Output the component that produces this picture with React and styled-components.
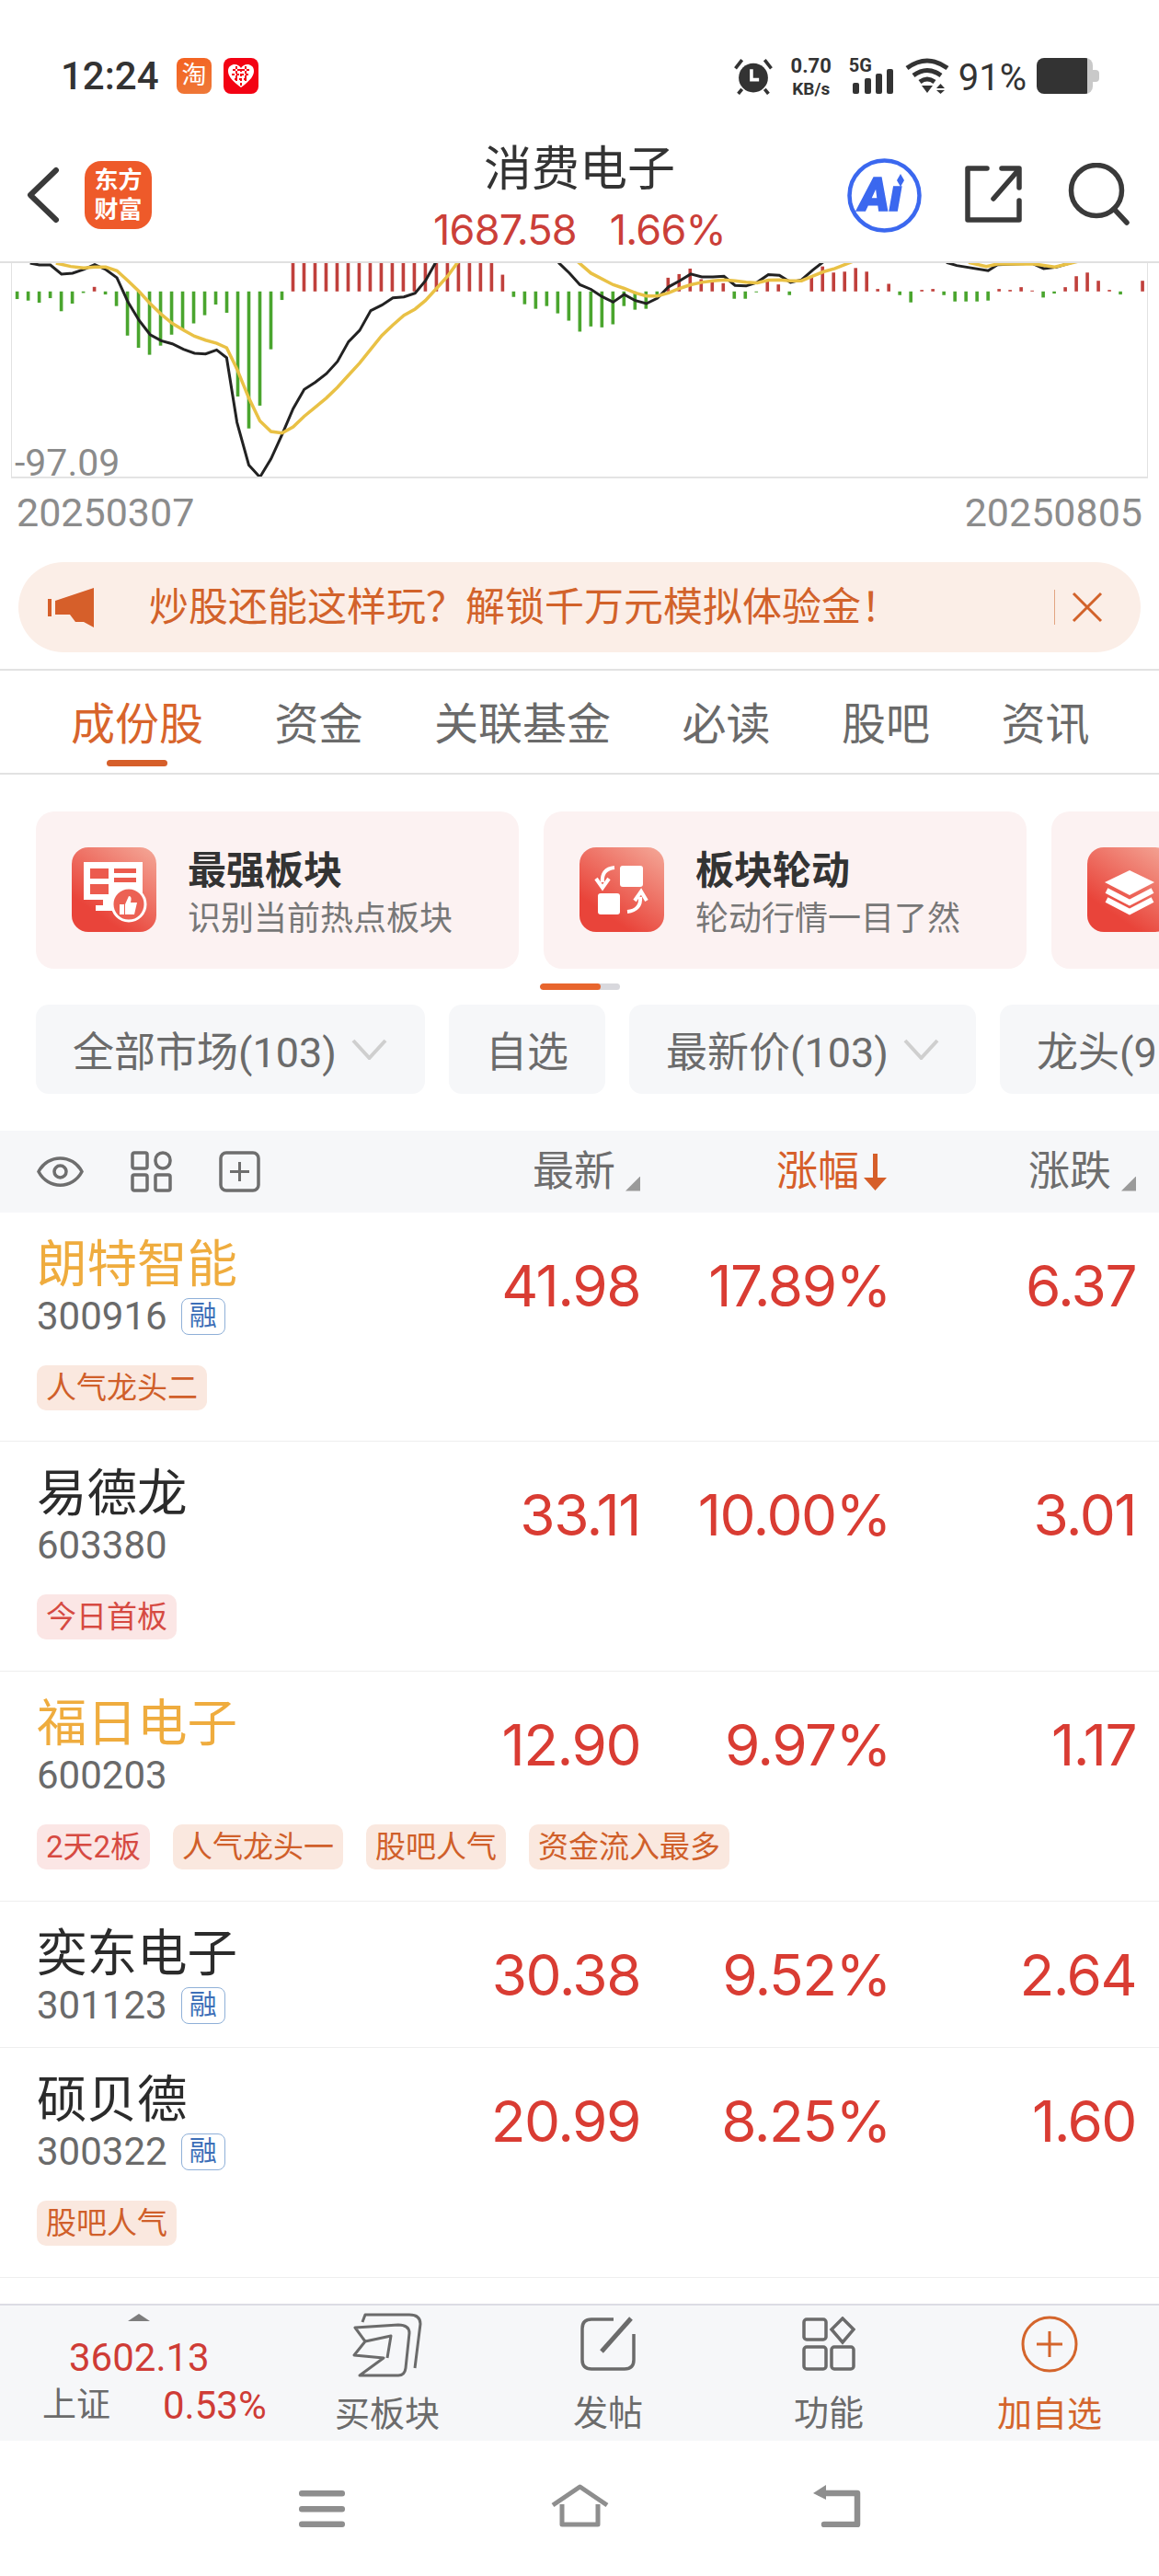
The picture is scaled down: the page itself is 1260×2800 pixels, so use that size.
import React from "react";
import styled, { createGlobalStyle } from "styled-components";

const GlobalStyle = createGlobalStyle`
  html, body {
    margin: 0;
    padding: 0;
    background: #fff;
  }
  body {
    font-family: Roboto, "Noto Sans CJK SC", sans-serif;
  }
`;

const Page = styled.div`
  width: 1260px;
  height: 2800px;
  overflow: hidden;
  background: #fff;
`;

/* status bar */
const StatusBar = styled.div`
  height: 150px;
  box-sizing: border-box;
  padding: 63px 65px 0 66px;
  display: flex;
  align-items: flex-start;
  color: #333;
`;
const Time = styled.div`
  font-size: 42px;
  line-height: 40px;
  font-weight: 500;
  width: 126px;
`;
const AppBadge = styled.div`
  width: 38px;
  height: 39px;
  border-radius: 8px;
  background: ${(p) => p.$bg};
  color: #fff;
  font-size: 27px;
  line-height: 38px;
  text-align: center;
  margin-right: 13px;
  overflow: hidden;
`;
const StatusRight = styled.div`
  margin-left: auto;
  display: flex;
  align-items: flex-start;
`;
const Speed = styled.div`
  width: 46px;
  margin: -1px 18px 0;
  font-weight: 700;
  text-align: center;
  div:first-child {
    font-size: 22px;
    line-height: 20px;
    margin-bottom: 6px;
  }
  div:last-child {
    font-size: 19px;
    line-height: 18px;
  }
`;
const Net = styled.div`
  width: 49px;
  margin-right: 12px;
  font-size: 20px;
  line-height: 16px;
  font-weight: 700;
  svg {
    display: block;
    margin-top: -4px;
  }
`;
const Percent = styled.div`
  font-size: 40px;
  line-height: 40px;
  margin: 2px 11px 0 10px;
`;
const Battery = styled.div`
  position: relative;
  width: 61px;
  height: 39px;
  border-radius: 8px;
  background: linear-gradient(90deg, #333 90%, #c9c9c9 90%);
  margin-right: 7px;
  &::after {
    content: "";
    position: absolute;
    right: -7px;
    top: 13px;
    width: 7px;
    height: 13px;
    border-radius: 0 4px 4px 0;
    background: #c9c9c9;
  }
`;

/* header */
const Header = styled.div`
  height: 136px;
  box-sizing: border-box;
  border-bottom: 2px solid #e0e0e0;
  display: grid;
  grid-template-columns: 1fr auto 1fr;
`;
const HeaderLeft = styled.div`
  display: flex;
  align-items: flex-start;
  padding: 25px 0 0 28px;
  gap: 27px;
  svg {
    margin-top: 6px;
  }
`;
const Logo = styled.div`
  width: 73px;
  height: 74px;
  border-radius: 18px;
  background: #ee5a2a;
  color: #fff;
  font-size: 26px;
  font-weight: 700;
  line-height: 32px;
  text-align: center;
  padding-top: 5px;
  box-sizing: border-box;
`;
const HeaderCenter = styled.div`
  text-align: center;
  padding-top: 5px;
`;
const Title = styled.div`
  font-size: 52px;
  line-height: 60px;
  color: #333;
`;
const SubTitle = styled.div`
  font-family: Inter, "Noto Sans CJK SC", sans-serif;
  font-size: 45px;
  letter-spacing: -0.8px;
  line-height: 60px;
  margin-top: 5px;
  color: #cb3f39;
  display: flex;
  gap: 36px;
  justify-content: center;
`;
const HeaderRight = styled.div`
  display: flex;
  justify-content: flex-end;
  align-items: flex-start;
  padding: 21px 31px 0 0;
`;

/* chart */
const ChartBox = styled.div`
  position: relative;
  margin: 0 12px;
  height: 234px;
  box-sizing: border-box;
  border-left: 1.5px solid #e2e2e2;
  border-right: 1.5px solid #e2e2e2;
  border-bottom: 2px solid #e4e4e4;
  svg {
    display: block;
    width: 100%;
    height: 100%;
  }
`;
const MinLabel = styled.div`
  position: absolute;
  left: 3px;
  bottom: -9px;
  font-size: 41px;
  line-height: 48px;
  color: #8b8b8b;
`;
const Dates = styled.div`
  display: flex;
  justify-content: space-between;
  padding: 13px 18px 0;
  height: 49px;
  font-size: 43px;
  line-height: 48px;
  color: #8c8c8c;
`;

/* banner */
const Banner = styled.div`
  margin: 29px 20px 18px;
  height: 98px;
  border-radius: 49px;
  background: #fbeee7;
  display: flex;
  align-items: center;
  padding-left: 32px;
  color: #d2622a;
`;
const BannerText = styled.div`
  margin-left: 60px;
  width: 984px;
  font-size: 43px;
  line-height: 50px;
  white-space: nowrap;
`;
const BannerLine = styled.div`
  width: 1px;
  height: 38px;
  background: #e2a582;
  margin-right: 18px;
`;

/* tabs */
const Tabs = styled.div`
  height: 115px;
  box-sizing: border-box;
  border-top: 2px solid #e2e2e2;
  border-bottom: 2px solid #e2e2e2;
  display: flex;
  gap: 77.5px;
  padding: 31px 0 0 77px;
`;
const Tab = styled.div`
  position: relative;
  font-size: 48px;
  line-height: 56px;
  height: 56px;
  color: ${(p) => (p.$active ? "#d8642b" : "#6a6a6a")};
  ${(p) =>
    p.$active &&
    `&::after {
      content: "";
      position: absolute;
      left: 39px;
      top: 66px;
      width: 66px;
      height: 7px;
      border-radius: 4px;
      background: #d65f2a;
    }`}
`;

/* feature cards */
const CardRow = styled.div`
  display: flex;
  gap: 27px;
  padding-left: 39px;
  margin-top: 40px;
  overflow: hidden;
`;
const Card = styled.div`
  flex: 0 0 525px;
  height: 171px;
  box-sizing: border-box;
  border-radius: 20px;
  background: #fcf2f2;
  display: flex;
  gap: 34px;
  padding: 39px 0 0 39px;
`;
const CardIcon = styled.div`
  width: 92px;
  height: 92px;
  flex: none;
  border-radius: 18px;
  background: linear-gradient(35deg, #e9443a 25%, #f4a999 100%);
  svg {
    display: block;
  }
`;
const CardText = styled.div`
  white-space: nowrap;
`;
const CardTitle = styled.div`
  font-size: 42px;
  line-height: 52px;
  font-weight: 700;
  color: #333;
`;
const CardSub = styled.div`
  font-size: 36px;
  line-height: 52px;
  color: #777;
`;
const Pager = styled.div`
  width: 87px;
  height: 7px;
  margin: 16px 0 16px 587px;
  border-radius: 4px;
  background: #d8d8dd;
  overflow: hidden;
  &::before {
    content: "";
    display: block;
    width: 66px;
    height: 7px;
    border-radius: 4px;
    background: #e8652d;
  }
`;

/* filters */
const Filters = styled.div`
  display: flex;
  gap: 26px;
  padding-left: 39px;
  overflow: hidden;
`;
const Filter = styled.div`
  flex: none;
  width: ${(p) => p.$w}px;
  height: 97px;
  box-sizing: border-box;
  border-radius: 14px;
  background: #f6f7f9;
  display: flex;
  align-items: center;
  gap: 16px;
  padding-left: 40px;
  font-size: 45px;
  color: #6b6b6b;
  white-space: nowrap;
`;

/* table */
const columns = "1fr 200px 272px 267px";
const TableHead = styled.div`
  margin-top: 40px;
  height: 89px;
  background: #f6f7f9;
  box-sizing: border-box;
  padding: 0 28px 0 40px;
  display: grid;
  grid-template-columns: ${columns};
  align-items: center;
`;
const HeadIcons = styled.div`
  display: flex;
  align-items: center;
  gap: 51px;
  svg {
    display: block;
  }
`;
const HeadCell = styled.div`
  display: flex;
  justify-content: flex-end;
  align-items: center;
  font-size: 45px;
  line-height: 52px;
  color: ${(p) => (p.$active ? "#d65f2a" : "#6e6e6e")};
`;
const SortMark = styled.span`
  width: 16px;
  height: 16px;
  margin: 26px -3px 0 11px;
  background: #9a9a9a;
  clip-path: polygon(100% 0, 100% 100%, 0 100%);
`;
const List = styled.div`
  height: 1186px;
`;
const Row = styled.div`
  box-sizing: border-box;
  height: ${(p) => p.$h}px;
  border-bottom: 1px solid #efefef;
  padding: 24px 28px 0 40px;
`;
const RowMain = styled.div`
  display: grid;
  grid-template-columns: ${columns};
`;
const StockName = styled.div`
  font-size: 54.5px;
  line-height: 64px;
  color: ${(p) => (p.$gold ? "#efac3e" : "#2b2b2b")};
`;
const StockCode = styled.div`
  display: flex;
  align-items: center;
  gap: 15px;
  margin-top: 3px;
  font-size: 42px;
  line-height: 44px;
  color: #6a6a6a;
`;
const RongBadge = styled.span`
  width: 48px;
  height: 40px;
  box-sizing: border-box;
  border: 1.5px solid #8fb0d8;
  border-radius: 8px;
  color: #3d6fb8;
  font-size: 30px;
  line-height: 36px;
  text-align: center;
`;
const Num = styled.div`
  font-family: Inter, "Noto Sans CJK SC", sans-serif;
  font-size: 62px;
  letter-spacing: -1.5px;
  line-height: 64px;
  padding-top: 24px;
  margin-right: -3px;
  text-align: right;
  color: #d93c33;
`;
const Tags = styled.div`
  display: flex;
  gap: 25px;
  margin-top: 31px;
`;
const Tag = styled.div`
  height: 49px;
  box-sizing: border-box;
  padding: 0 10px;
  border-radius: 10px;
  font-size: 33px;
  line-height: 49px;
  background: ${(p) => (p.$red ? "#fbe6e5" : "#fae8df")};
  color: ${(p) => (p.$red ? "#d64a42" : "#d05f2a")};
`;

/* bottom bar */
const BottomBar = styled.div`
  height: 149px;
  box-sizing: border-box;
  border-top: 2px solid #dcdce4;
  background: #f6f7f9;
  display: grid;
  grid-template-columns: 301px repeat(4, 240px);
`;
const IndexBox = styled.div`
  position: relative;
  padding: 35px 0 0 46px;
  &::before {
    content: "";
    position: absolute;
    left: 139px;
    top: 9px;
    border-left: 12px solid transparent;
    border-right: 12px solid transparent;
    border-bottom: 8px solid #7d7d7d;
  }
`;
const IndexValue = styled.div`
  font-size: 42px;
  line-height: 44px;
  color: #cf3c36;
  padding-left: 29px;
`;
const IndexLine = styled.div`
  display: flex;
  align-items: center;
  margin-top: 8px;
  line-height: 44px;
  font-size: 37px;
  color: #6b6b6b;
  span {
    font-size: 42px;
    color: #cf3c36;
    margin-left: 57px;
  }
`;
const Action = styled.div`
  height: 147px;
  display: flex;
  flex-direction: column;
  align-items: center;
  padding-top: ${(p) => p.$top}px;
  box-sizing: border-box;
  font-size: 38px;
  line-height: 44px;
  color: ${(p) => (p.$active ? "#d4652c" : "#6b6b6b")};
  svg {
    display: block;
    margin-bottom: ${(p) => p.$gap}px;
  }
`;
const NavBar = styled.div`
  display: grid;
  grid-template-columns: repeat(3, 280px);
  justify-content: center;
  justify-items: center;
  align-items: end;
  height: 94px;
  svg {
    display: block;
  }
`;

// bar heights read off the chart, + is red and - is green
const macdBars = [
  -25, -30, -37, -22, -65, -40, -5, 15, -10, -48, -145, -185, -208, -178, -142, -125, -105, -78, -43, -70, -345,
  -450, -375, -190, -28, 100, 100, 100, 100, 100, 100, 100, 100, 100, 100, 100, 100, 100, 100, 100, 100, 100, 100,
  100, 55, -18, -42, -57, -48, -72, -96, -132, -115, -118, -108, -48, -60, -57, -20, 45, 57, 75, 40, 30, 27, -24,
  -24, -3, 35, 23, -12, 0, 47, 82, 62, 65, 77, 65, 8, 25, -12, -36, 5, 8, -12, -33, -33, -33, -30, 8, 5, 14, 3, -20,
  -7, 14, 50, 62, 35, 5, -10, 0, 35,
];

const difLines = [
  "80,407 105,413 135,413 165,443 195,440 225,428 255,412 285,428 315,455 345,535 375,595 405,642 435,662 465,672 495,690 525,703 555,705 585,692 612,718 640,930 672,1070 702,1110 732,1050 762,970 792,885 822,822 852,798 882,770 912,730 942,665 972,628 1002,563 1032,545 1062,521 1092,518 1122,506 1150,465 1180,400",
  "2230,400 2198,430 2168,462 2138,470 2108,447 2078,445 2048,470 2018,482 1988,480 1958,450 1928,452 1898,452 1868,443 1838,465 1808,485 1778,522 1748,540 1718,530 1688,510 1658,535 1628,517 1598,493 1568,478 1540,440 1510,405",
  "2560,405 2588,415 2673,432 2698,412 2793,408 2823,425 2858,420 2900,405",
];
const deaLines = [
  "150,407 190,418 225,423 255,420 285,420 315,432 345,465 375,500 405,540 435,575 465,605 495,627 525,647 555,660 585,670 612,685 640,755 672,850 702,925 732,960 762,965 792,945 822,910 852,880 882,850 912,815 942,775 972,735 1002,690 1032,645 1062,610 1092,578 1122,558 1150,530 1180,490 1210,450 1240,400",
  "1560,400 1598,440 1658,478 1688,490 1718,505 1748,515 1778,515 1808,505 1838,490 1868,478 1898,470 1928,465 1958,462 1988,465 2018,470 2048,472 2078,463 2108,462 2138,465 2168,465 2198,450 2228,435 2258,425 2310,400",
  "2620,405 2668,418 2698,410 2793,409 2853,420 2915,402",
];

const stocks = [
  { name: "朗特智能", code: "300916", rong: true, gold: true, price: "41.98", pct: "17.89%", diff: "6.37", h: 249, tags: [{ text: "人气龙头二" }] },
  { name: "易德龙", code: "603380", price: "33.11", pct: "10.00%", diff: "3.01", h: 250, tags: [{ text: "今日首板", red: true }] },
  {
    name: "福日电子",
    code: "600203",
    gold: true,
    price: "12.90",
    pct: "9.97%",
    diff: "1.17",
    h: 250,
    tags: [{ text: "2天2板", red: true }, { text: "人气龙头一" }, { text: "股吧人气" }, { text: "资金流入最多" }],
  },
  { name: "奕东电子", code: "301123", rong: true, price: "30.38", pct: "9.52%", diff: "2.64", h: 159, tags: [] },
  { name: "硕贝德", code: "300322", rong: true, price: "20.99", pct: "8.25%", diff: "1.60", h: 250, tags: [{ text: "股吧人气" }] },
];

const MacdChart = () => (
  <svg viewBox="31 407 3072 701" preserveAspectRatio="none">
    {macdBars.map((v, i) =>
      v === 0 ? null : (
        <rect
          key={i}
          x={40.5 + 29.86 * i}
          y={v > 0 ? 500 - v : 500}
          width="9"
          height={Math.abs(v)}
          fill={v > 0 ? "#c0403c" : "#4aa52e"}
        />
      )
    )}
    {difLines.map((pts) => (
      <polyline key={pts} points={pts} fill="none" stroke="#222" strokeWidth="3" vectorEffect="non-scaling-stroke" />
    ))}
    {deaLines.map((pts) => (
      <polyline key={pts} points={pts} fill="none" stroke="#e9c145" strokeWidth="3.5" vectorEffect="non-scaling-stroke" />
    ))}
  </svg>
);

const App = () => (
  <Page>
    <GlobalStyle />
    <StatusBar>
      <Time>12:24</Time>
      <AppBadge $bg="linear-gradient(160deg, #f4611f, #ee7a3a)">淘</AppBadge>
      <AppBadge $bg="#f30213">
        <svg width="38" height="39" viewBox="0 0 38 39">
          <path d="M19 32 C8 24 5 19 5 14 C5 9 9 7 12 7 C15 7 18 9 19 11 C20 9 23 7 26 7 C29 7 33 9 33 14 C33 19 30 24 19 32Z" fill="#fff" />
          <path d="M10 13h18M9 18h20M12 23h14M14 9v16M19 12v18M24 9v16" stroke="#f30213" strokeWidth="2" strokeDasharray="3 2" />
        </svg>
      </AppBadge>
      <StatusRight>
        <svg width="44" height="40" viewBox="0 0 40 39">
          <circle cx="20" cy="21" r="15.5" fill="#333" />
          <path d="M18 12v11h8" fill="none" stroke="#fff" strokeWidth="3.5" />
          <path d="M1 11 L8 2 M39 11 L32 2 M8 33 L4 38 M32 33 L36 38" stroke="#333" strokeWidth="3.5" />
        </svg>
        <Speed>
          <div>0.70</div>
          <div>KB/s</div>
        </Speed>
        <Net>
          5G
          <svg width="49" height="27" viewBox="0 0 49 27">
            <rect x="4" y="15" width="7" height="12" rx="2" fill="#333" />
            <rect x="17" y="10" width="7" height="17" rx="2" fill="#333" />
            <rect x="29" y="5" width="7" height="22" rx="2" fill="#333" />
            <rect x="41" y="0" width="7" height="27" rx="2" fill="#333" />
          </svg>
        </Net>
        <svg width="48" height="39" viewBox="0 0 48 39">
          <path d="M2 11 Q24 -5 46 11 M9 19 Q24 8 39 19 M16 26 Q24 20 32 26" fill="none" stroke="#333" strokeWidth="5" />
          <path d="M18 30h12l-6 8z" fill="#333" />
          <path d="M34 33h9l-4.500 -5z M34 35h9l-4.500 4z" fill="#333" />
        </svg>
        <Percent>91%</Percent>
        <Battery />
      </StatusRight>
    </StatusBar>

    <Header>
      <HeaderLeft>
        <svg width="37" height="62" viewBox="0 0 37 62">
          <path d="M33 4 L5 31 L33 58" fill="none" stroke="#3a3a3a" strokeWidth="6" strokeLinecap="round" strokeLinejoin="round" />
        </svg>
        <Logo>
          东方
          <br />
          财富
        </Logo>
      </HeaderLeft>
      <HeaderCenter>
        <Title>消费电子</Title>
        <SubTitle>
          <span>1687.58</span>
          <span>1.66%</span>
        </SubTitle>
      </HeaderCenter>
      <HeaderRight>
        <svg width="83" height="83" viewBox="0 0 83 83" style={{ marginRight: 44 }}>
          <circle cx="41.500" cy="41.500" r="38" fill="none" stroke="#3b68ef" strokeWidth="4.500" />
          <text x="14" y="58" fontFamily="Roboto" fontSize="50" fontWeight="900" fontStyle="italic" fill="#3b68ef" stroke="#3b68ef" strokeWidth="1.500">
            Ai
          </text>
          <rect x="48" y="17" width="18" height="14" fill="#fff" />
          <path d="M59 18 L63 25 L59 32 L55 25Z" fill="#3b68ef" />
        </svg>
        <svg width="65" height="66" viewBox="0 0 65 66" style={{ marginRight: 49, marginTop: 7 }}>
          <path
            d="M26 5 H5 V61 H61 V40 M33 38 L60 7 M42 5 H61 V26"
            fill="none"
            stroke="#3a3a3a"
            strokeWidth="5.500"
            strokeLinecap="round"
            strokeLinejoin="round"
          />
        </svg>
        <svg width="68" height="68" viewBox="0 0 68 68" style={{ marginTop: 6 }}>
          <circle cx="31" cy="30" r="27.500" fill="none" stroke="#3a3a3a" strokeWidth="5.500" />
          <path d="M50 50 L64 65" stroke="#3a3a3a" strokeWidth="5.500" strokeLinecap="round" />
        </svg>
      </HeaderRight>
    </Header>

    <ChartBox>
      <MacdChart />
      <MinLabel>-97.09</MinLabel>
    </ChartBox>
    <Dates>
      <span>20250307</span>
      <span>20250805</span>
    </Dates>

    <Banner>
      <svg width="50" height="43" viewBox="0 0 50 43">
        <path d="M0 12h4v19H0z M8 14 L50 0 V43 L39 37 H30 L24 29 H8Z" fill="#d65f2a" />
      </svg>
      <BannerText>{"炒股还能这样玩\uFF1F解锁千万元模拟体验金\uFF01"}</BannerText>
      <BannerLine />
      <svg width="34" height="34" viewBox="0 0 34 34">
        <path d="M2 2 L32 32 M32 2 L2 32" stroke="#d2622a" strokeWidth="3" />
      </svg>
    </Banner>

    <Tabs>
      <Tab $active>成份股</Tab>
      <Tab>资金</Tab>
      <Tab>关联基金</Tab>
      <Tab>必读</Tab>
      <Tab>股吧</Tab>
      <Tab>资讯</Tab>
    </Tabs>

    <CardRow>
      <Card>
        <CardIcon>
          <svg width="92" height="92" viewBox="0 0 92 92">
            <path d="M13 16h64v36h-20v17H26v-6h8v-6H13z" fill="#fff" />
            <path d="M20 23h20v11H20z M20 40h20v11H20z M46 23h24v5H46z M46 33h24v5H46z" fill="#ec5b4e" />
            <circle cx="62" cy="62" r="18" fill="#ec6154" stroke="#fff" strokeWidth="3" />
            <path d="M52 62h5v11h-5z M58 62l4-9c3 0 3 3 2 7h7l-3 13H58z" fill="#fff" />
          </svg>
        </CardIcon>
        <CardText>
          <CardTitle>最强板块</CardTitle>
          <CardSub>识别当前热点板块</CardSub>
        </CardText>
      </Card>
      <Card>
        <CardIcon>
          <svg width="92" height="92" viewBox="0 0 92 92">
            <rect x="44" y="20" width="25" height="23" rx="3" fill="#fff" />
            <rect x="20" y="50" width="24" height="23" rx="3" fill="#fff" />
            <path d="M38 22 C28 23 24 29 25 38 M18 34 L25 44 L32 34" fill="none" stroke="#fff" strokeWidth="4" />
            <path d="M52 70 C62 69 67 63 66 54 M60 58 L67 48 L73 58" fill="none" stroke="#fff" strokeWidth="4" />
          </svg>
        </CardIcon>
        <CardText>
          <CardTitle>板块轮动</CardTitle>
          <CardSub>轮动行情一目了然</CardSub>
        </CardText>
      </Card>
      <Card>
        <CardIcon>
          <svg width="92" height="92" viewBox="0 0 92 92">
            <path d="M46 25 L73 38 L46 52 L19 38Z" fill="#fff" />
            <path d="M21 47 L46 60 L71 47 M21 57 L46 70 L71 57" fill="none" stroke="#fff" strokeWidth="6" />
          </svg>
        </CardIcon>
      </Card>
    </CardRow>
    <Pager />

    <Filters>
      <Filter $w={423}>
        全部市场(103)
        <svg width="39" height="23" viewBox="0 0 39 23">
          <path d="M2 2 L19.500 21 L37 2" fill="none" stroke="#cfcfcf" strokeWidth="4" />
        </svg>
      </Filter>
      <Filter $w={170}>自选</Filter>
      <Filter $w={377}>
        最新价(103)
        <svg width="39" height="23" viewBox="0 0 39 23">
          <path d="M2 2 L19.500 21 L37 2" fill="none" stroke="#cfcfcf" strokeWidth="4" />
        </svg>
      </Filter>
      <Filter $w={200}>龙头(9</Filter>
    </Filters>

    <TableHead>
      <HeadIcons>
        <svg width="51" height="33" viewBox="0 0 51 33">
          <path d="M2 16.500 C12 -3 39 -3 49 16.500 C39 36 12 36 2 16.500Z" fill="none" stroke="#6e6e6e" strokeWidth="3.500" />
          <circle cx="25.500" cy="16.500" r="6.500" fill="none" stroke="#6e6e6e" strokeWidth="3.500" />
        </svg>
        <svg width="45" height="45" viewBox="0 0 45 45">
          <g fill="none" stroke="#6e6e6e" strokeWidth="3.500">
            <rect x="2" y="2" width="16" height="17" rx="2" />
            <rect x="27" y="2" width="16" height="17" rx="8" />
            <rect x="2" y="26" width="16" height="17" rx="2" />
            <rect x="27" y="26" width="16" height="17" rx="2" />
          </g>
        </svg>
        <svg width="45" height="45" viewBox="0 0 45 45">
          <rect x="2" y="2" width="41" height="41" rx="6" fill="none" stroke="#6e6e6e" strokeWidth="3.500" />
          <path d="M22.500 12v21 M12 22.500h21" stroke="#6e6e6e" strokeWidth="3" />
        </svg>
      </HeadIcons>
      <HeadCell>
        最新
        <SortMark />
      </HeadCell>
      <HeadCell $active>
        涨幅
        <svg width="27" height="40" viewBox="0 0 27 40" style={{ marginLeft: 4 }}>
          <path d="M11 0h5v26h10L13.500 40 1 26h10z" fill="#d65f2a" />
        </svg>
      </HeadCell>
      <HeadCell>
        涨跌
        <SortMark />
      </HeadCell>
    </TableHead>

    <List>
      {stocks.map((s) => (
        <Row key={s.code} $h={s.h}>
          <RowMain>
            <div>
              <StockName $gold={s.gold}>{s.name}</StockName>
              <StockCode>
                {s.code}
                {s.rong && <RongBadge>融</RongBadge>}
              </StockCode>
            </div>
            <Num>{s.price}</Num>
            <Num>{s.pct}</Num>
            <Num>{s.diff}</Num>
          </RowMain>
          {s.tags.length > 0 && (
            <Tags>
              {s.tags.map((t) => (
                <Tag key={t.text} $red={t.red}>
                  {t.text}
                </Tag>
              ))}
            </Tags>
          )}
        </Row>
      ))}
    </List>

    <BottomBar>
      <IndexBox>
        <IndexValue>3602.13</IndexValue>
        <IndexLine>
          上证<span>0.53%</span>
        </IndexLine>
      </IndexBox>
      <Action $top={8} $gap={18}>
        <svg width="76" height="70" viewBox="0 0 76 70">
          <g fill="none" stroke="#6b6b6b" strokeWidth="3" strokeLinejoin="round">
            <path d="M11 10 L14 2 H62 Q74 2 74 12 L68 60" />
            <path d="M14 31 L3 16 L50 13 Q62 13 62 22 L58 60 Q57 68 50 68 H8 L34 49 L2 46 L14 31 L42 25 L38 49" />
          </g>
        </svg>
        买板块
      </Action>
      <Action $top={12} $gap={23}>
        <svg width="60" height="60" viewBox="0 0 60 60">
          <path d="M36 3 H12 Q2 3 2 13 V47 Q2 57 12 57 H48 Q58 57 58 47 V19" fill="none" stroke="#6b6b6b" strokeWidth="3.500" />
          <path d="M55 2 L23 38" stroke="#6b6b6b" strokeWidth="5" />
        </svg>
        发帖
      </Action>
      <Action $top={12} $gap={24}>
        <svg width="58" height="59" viewBox="0 0 58 59">
          <g fill="none" stroke="#6b6b6b" strokeWidth="3.500">
            <rect x="2" y="3" width="24" height="22" rx="3" />
            <path d="M44 2 L56 14 L44 28 L32 14Z" />
            <rect x="2" y="33" width="24" height="24" rx="3" />
            <rect x="32" y="33" width="24" height="24" rx="3" />
          </g>
        </svg>
        功能
      </Action>
      <Action $active $top={11} $gap={23}>
        <svg width="62" height="62" viewBox="0 0 62 62">
          <circle cx="31" cy="31" r="29" fill="none" stroke="#d4652c" strokeWidth="3" />
          <path d="M31 17v28 M17 31h28" stroke="#d4652c" strokeWidth="3" />
        </svg>
        加自选
      </Action>
    </BottomBar>

    <NavBar>
      <svg width="50" height="40" viewBox="0 0 50 40">
        <rect x="0" y="0" width="50" height="6.500" rx="3" fill="#8e8e8e" />
        <rect x="0" y="17" width="50" height="6.500" rx="3" fill="#8e8e8e" />
        <rect x="0" y="33.500" width="50" height="6.500" rx="3" fill="#8e8e8e" />
      </svg>
      <svg width="63" height="47" viewBox="0 0 63 47">
        <path d="M2 23 L31.500 3 L61 23 M12 22 V44 H51 V22" fill="none" stroke="#8e8e8e" strokeWidth="5" strokeLinejoin="round" />
      </svg>
      <svg width="52" height="46" viewBox="0 0 52 46">
        <path d="M8 9 H48 V43 H12" fill="none" stroke="#8e8e8e" strokeWidth="6.500" strokeLinecap="round" strokeLinejoin="round" />
        <path d="M14 0 V16 L0 9Z" fill="#8e8e8e" />
      </svg>
    </NavBar>
  </Page>
);

export default App;
